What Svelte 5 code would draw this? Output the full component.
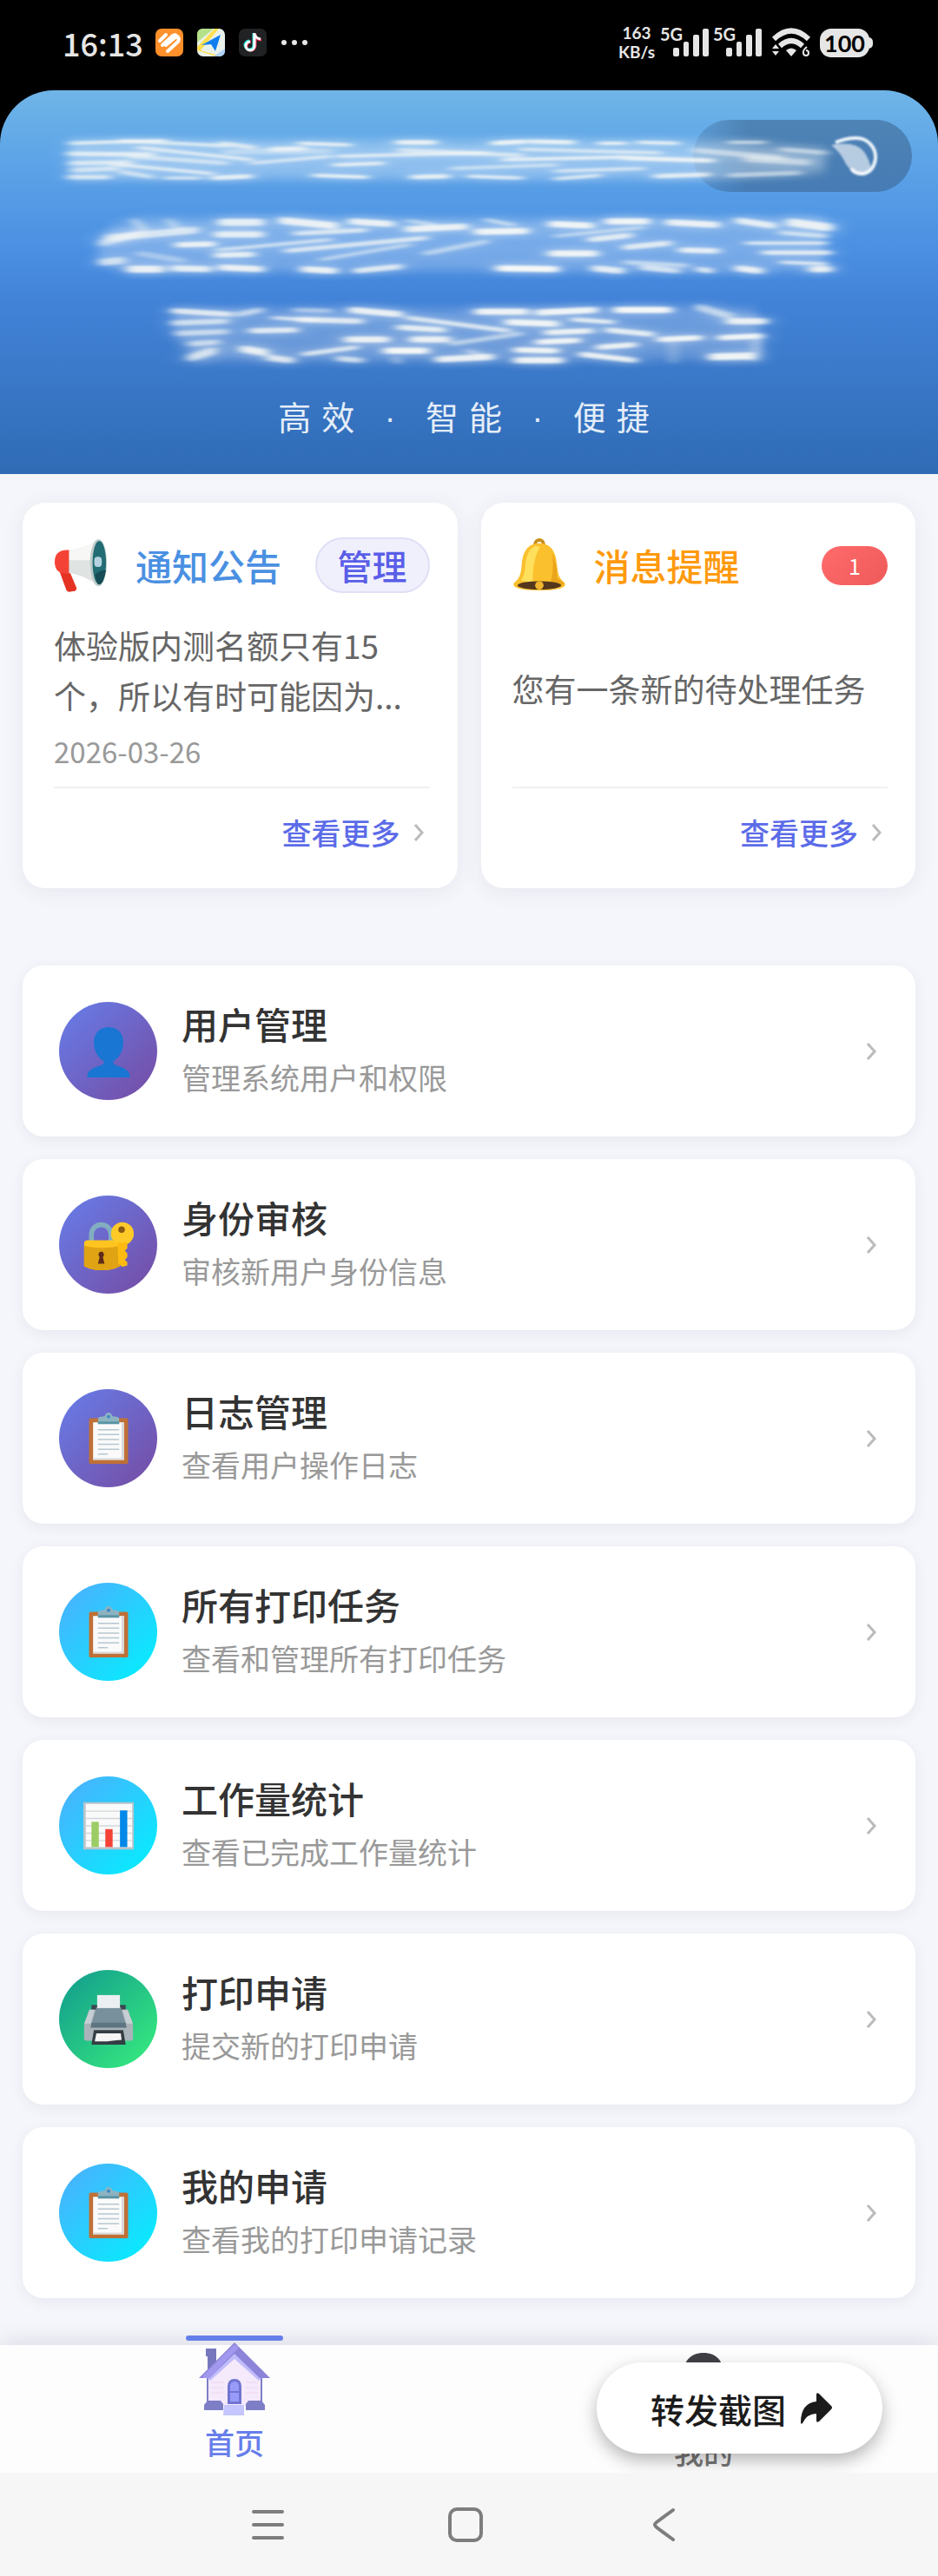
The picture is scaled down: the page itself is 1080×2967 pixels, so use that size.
<script lang="ts">
  type Icon = 'user' | 'lock' | 'clipboard' | 'chart' | 'printer';
  type Item = { title: string; note: string; icon: Icon; tone: 'violet' | 'cyan' | 'green' };

  const items: Item[] = [
    { title: '用户管理', note: '管理系统用户和权限', icon: 'user', tone: 'violet' },
    { title: '身份审核', note: '审核新用户身份信息', icon: 'lock', tone: 'violet' },
    { title: '日志管理', note: '查看用户操作日志', icon: 'clipboard', tone: 'violet' },
    { title: '所有打印任务', note: '查看和管理所有打印任务', icon: 'clipboard', tone: 'cyan' },
    { title: '工作量统计', note: '查看已完成工作量统计', icon: 'chart', tone: 'cyan' },
    { title: '打印申请', note: '提交新的打印申请', icon: 'printer', tone: 'green' },
    { title: '我的申请', note: '查看我的打印申请记录', icon: 'clipboard', tone: 'cyan' }
  ];

  // Brush strokes that cover the title: x1, y1, x2, y2, width, opacity
  const strokes: number[][] = [
    // first line
    [82, 61, 190, 58, 4, 0.75], [140, 58, 260, 64, 4, 0.7], [80, 73, 175, 74, 5, 0.75], [160, 66, 290, 80, 4, 0.7],
    [82, 84, 150, 83, 5, 0.65], [85, 92, 135, 90, 5, 0.6], [80, 100, 125, 100, 5, 0.7], [130, 85, 245, 96, 4, 0.7],
    [150, 76, 260, 84, 5, 0.55], [140, 94, 175, 100, 5, 0.6], [190, 101, 230, 101, 4, 0.6], [255, 61, 292, 66, 5, 0.7],
    [312, 68, 350, 67, 5, 0.8], [345, 61, 402, 63, 4, 0.8], [458, 60, 500, 60, 5, 0.9], [568, 61, 605, 59, 5, 0.9],
    [612, 59, 660, 60, 5, 0.85], [690, 61, 720, 61, 4, 0.8], [735, 60, 780, 61, 4, 0.8], [245, 101, 288, 99, 5, 0.85],
    [362, 98, 422, 100, 4, 0.85], [475, 100, 515, 99, 5, 0.85], [540, 99, 600, 101, 4, 0.75], [640, 102, 690, 98, 4, 0.7],
    [755, 99, 815, 97, 5, 0.8], [290, 84, 380, 76, 4, 0.6], [385, 86, 440, 84, 4, 0.8], [390, 76, 560, 72, 4, 0.7],
    [460, 69, 600, 75, 5, 0.6], [580, 80, 720, 77, 4, 0.75], [600, 68, 760, 72, 4, 0.6], [720, 78, 820, 81, 5, 0.85],
    [520, 90, 640, 86, 4, 0.5], [640, 93, 740, 90, 4, 0.6], [840, 60, 880, 60, 4, 0.55], [800, 69, 900, 78, 6, 0.5],
    [860, 79, 930, 83, 7, 0.5], [840, 98, 920, 95, 5, 0.5], [900, 68, 950, 72, 5, 0.5], [260, 71, 380, 70, 6, 0.35],
    // second line
    [155, 150, 165, 160, 6, 0.6], [195, 150, 205, 160, 6, 0.55], [125, 170, 225, 161, 8, 0.7], [118, 176, 160, 165, 8, 0.6],
    [255, 152, 300, 152, 8, 0.85], [325, 150, 385, 156, 8, 0.9], [405, 151, 450, 154, 7, 0.9], [470, 160, 535, 157, 7, 0.9],
    [250, 166, 300, 166, 7, 0.85], [340, 165, 420, 161, 5, 0.7], [550, 163, 605, 162, 7, 0.95], [635, 154, 680, 156, 7, 0.95],
    [560, 149, 590, 155, 4, 0.6], [700, 151, 745, 151, 7, 0.95], [770, 152, 825, 155, 7, 0.9], [850, 150, 890, 156, 7, 0.85],
    [910, 152, 955, 158, 9, 0.9], [205, 178, 245, 177, 6, 0.9], [250, 184, 380, 172, 4, 0.6], [330, 185, 490, 170, 5, 0.7],
    [250, 190, 290, 189, 6, 0.85], [370, 195, 470, 178, 4, 0.5], [490, 188, 560, 174, 5, 0.5], [635, 188, 685, 188, 7, 0.95],
    [680, 172, 725, 167, 6, 0.8], [720, 181, 770, 176, 6, 0.8], [785, 184, 825, 185, 6, 0.85], [860, 176, 950, 176, 4, 0.7],
    [880, 187, 955, 187, 5, 0.8], [900, 164, 950, 168, 5, 0.6], [118, 198, 140, 196, 8, 0.7], [150, 206, 185, 206, 8, 0.9],
    [200, 205, 240, 206, 7, 0.85], [255, 204, 300, 206, 7, 0.9], [350, 206, 385, 208, 7, 0.9], [410, 208, 460, 203, 6, 0.8],
    [575, 205, 640, 206, 7, 1], [685, 205, 715, 208, 7, 0.85], [740, 204, 780, 208, 6, 0.7], [805, 206, 818, 208, 6, 0.8],
    [850, 205, 875, 208, 7, 0.9], [900, 198, 950, 200, 4, 0.7], [935, 206, 955, 206, 7, 0.9], [470, 150, 500, 155, 4, 0.5],
    [720, 198, 790, 202, 5, 0.5], [160, 188, 210, 196, 6, 0.35], [640, 168, 740, 158, 4, 0.45],
    // third line
    [200, 254, 265, 258, 6, 0.8], [275, 258, 300, 253, 6, 0.6], [200, 268, 260, 266, 6, 0.65], [205, 280, 260, 278, 6, 0.6],
    [220, 292, 250, 290, 6, 0.6], [220, 308, 245, 300, 9, 0.75], [315, 262, 365, 265, 4, 0.7], [345, 264, 415, 266, 6, 0.8],
    [405, 253, 460, 258, 7, 0.9], [340, 253, 380, 254, 5, 0.45], [550, 255, 605, 255, 7, 0.95], [620, 256, 685, 253, 7, 0.95],
    [710, 253, 770, 253, 7, 1], [805, 250, 840, 260, 8, 0.6], [840, 266, 880, 266, 7, 0.9], [470, 262, 585, 277, 5, 0.75],
    [290, 277, 340, 276, 6, 0.8], [460, 273, 510, 276, 6, 0.85], [585, 267, 640, 269, 7, 0.95], [660, 264, 705, 267, 5, 0.8],
    [630, 279, 680, 277, 6, 0.9], [700, 276, 750, 281, 6, 0.85], [400, 287, 445, 287, 7, 0.9], [475, 287, 515, 287, 7, 0.9],
    [620, 290, 665, 288, 6, 0.95], [760, 287, 805, 285, 6, 0.95], [830, 285, 875, 283, 6, 0.95], [280, 298, 305, 302, 8, 0.9],
    [310, 308, 335, 311, 7, 0.8], [350, 304, 410, 296, 5, 0.75], [390, 309, 415, 311, 6, 0.7], [445, 300, 490, 300, 7, 1],
    [505, 310, 565, 307, 7, 0.9], [595, 299, 640, 300, 6, 0.95], [595, 311, 645, 311, 7, 0.95], [690, 296, 730, 293, 6, 0.9],
    [670, 304, 730, 311, 6, 0.9], [820, 307, 865, 306, 8, 0.95], [872, 285, 868, 310, 5, 0.7], [775, 290, 775, 312, 5, 0.4],
    [520, 292, 600, 280, 5, 0.5], [540, 300, 560, 308, 5, 0.5], [455, 309, 458, 313, 5, 0.6]
  ];
</script>

{#snippet chevron()}
  <svg class="chevron" viewBox="0 0 14 24" aria-hidden="true"><path d="M3 3l8 9-8 9" /></svg>
{/snippet}

{#snippet signal()}
  <span class="signal">
    <span class="gen">5G</span>
    <svg viewBox="0 0 42 32" aria-hidden="true" fill="#e6e6e6">
      <rect x="0" y="22" width="7" height="10" rx="2" /><rect x="12" y="15" width="6" height="17" rx="2" />
      <rect x="23" y="7" width="7" height="25" rx="2" /><rect x="34" y="0" width="7" height="32" rx="2" />
    </svg>
  </span>
{/snippet}

{#snippet glyph(name: Icon)}
  <svg viewBox="0 0 64 64" aria-hidden="true">
    {#if name === 'user'}
      <path fill="#1976d2" d="M32 2c-12 0-19 9-18 21 .5 9 5 17 12 21v3c-3 4-18 4-20 14-.4 2 0 3 1 3h50c1 0 1.400-1 1-3-2-10-17-10-20-14v-3c7-4 11.500-12 12-21C51 11 44 2 32 2z" />
    {:else if name === 'lock'}
      <path fill="none" stroke="#82aec0" stroke-width="6" d="M11 32V19a12 12 0 0 1 24 0v13" />
      <path fill="#ffc41f" d="M2 30q0-4 4-4h36q4 0 4 4v28q-10 5-22 5T2 58z" />
      <path fill="#dfa313" d="M2 33q22 5 44 0v25q-10 5-22 5T2 58z" />
      <path fill="#5d2a1b" d="M23 40a4 4 0 0 1 2 7l2 8h-8l2-8a4 4 0 0 1 2-7z" />
      <circle cx="49" cy="18" r="14" fill="#ffca28" /><circle cx="48" cy="13" r="4" fill="#8a5a13" />
      <path fill="#fdbb12" d="M43 29h12v7l-3 3 3 3v5l-3 3 3 3v4l-6 2-5-4z" />
    {:else if name === 'clipboard'}
      <rect x="8" y="7" width="48" height="56" rx="2" fill="#bf7036" />
      <path fill="#fafafa" d="M13 12h38v46H13z" /><path fill="#d9d9d9" d="M48 12h3v46H13v-2h35z" />
      <path fill="#8db3c1" d="M19 8q0-3 4-3 5 0 5-2c1-4 7-4 8 0q0 2 5 2 4 0 4 3v6H19z" />
      <path fill="#5a95a5" d="M19 11h26v3H19z" /><circle cx="32" cy="5" r="2" fill="#3b86c5" />
      <path stroke="#b6c7d0" stroke-width="1.500" d="M19 21h26M19 27h26M19 33h26M19 39h26M19 45h26M19 51h12" />
    {:else if name === 'chart'}
      <path fill="#b8c4ca" d="M1 3h62v58H1z" /><path fill="#fafafa" d="M4 5h57v53H4z" />
      <path stroke="#d2d8da" stroke-width="1.500" d="M4 14h57M4 23h57M4 32h57M4 41h57M4 50h57" />
      <path fill="#9ccc65" d="M11 27h9v31h-9z" /><path fill="#f44336" d="M28 36h9v22h-9z" /><path fill="#0288e8" d="M46 13h9v45h-9z" />
    {:else}
      <path fill="#3b4850" d="M11 14h42v9H11z" />
      <path fill="#a9b3b9" d="M8 20h48l6 18v18q0 2-3 2H5q-3 0-3-2V38z" />
      <path fill="#c6cfd4" d="M9 20h6l-5 17H2zM49 20h6l7 17h-8z" />
      <path fill="#78909c" d="M17 17h30l7 24H10z" /><path fill="#5d7581" d="M11 36h42l1 6H10z" />
      <path fill="#eceff1" d="M18 2h28v16H18z" />
      <path fill="#333d43" d="M14 45h36l3 18H11z" /><path fill="#f5f5f5" d="M17 49h30l1 8q-14 1-18 2H15z" />
    {/if}
  </svg>
{/snippet}

<div class="app">
  <div class="top">
    <div class="status">
      <span class="clock">16:13</span>
      <svg class="app-icon" viewBox="0 0 32 32" aria-hidden="true">
        <rect width="32" height="32" rx="7" fill="#ff902b" />
        <path d="M5 14l7-7M8 19L20 8q4-2 4 1L12 19M14 26l12-11q2-4-1-6" fill="none" stroke="#fff" stroke-width="4" stroke-linecap="round" />
      </svg>
      <svg class="app-icon" viewBox="0 0 32 32" aria-hidden="true">
        <rect width="32" height="32" rx="7" fill="#e9f2ea" />
        <path fill="#b5e08a" d="M0 7q0-7 7-7h12L0 16z" /><path fill="#ffdf52" d="M0 21l20-21h5L4 25l24 7h-6L0 25z" /><path fill="#b0d2fb" d="M19 32l13-9v2q0 7-7 7z" />
        <path fill="#107df0" d="M5 19L27 7l-6 19-5-8z" />
      </svg>
      <svg class="app-icon" viewBox="0 0 32 32" aria-hidden="true">
        <rect width="32" height="32" rx="7" fill="#202224" />
        <g fill="none" stroke-width="3"><path stroke="#ee2950" d="M19 6v14a5 5 0 1 1-5-5M19 7q1 6 7 6" /><path stroke="#2ae6e0" d="M17 5v14a5 5 0 1 1-5-5" /><path stroke="#fff" d="M18 5v15a5 5 0 1 1-5-5M18 6q1 5 7 6" /></g>
      </svg>
      <svg class="dots" viewBox="0 0 32 8" fill="#e6e6e6" aria-hidden="true"><circle cx="4" cy="4" r="3" /><circle cx="16" cy="4" r="3" /><circle cx="28" cy="4" r="3" /></svg>
      <span class="speed"><span>163</span><span>KB/s</span></span>
      {@render signal()}
      {@render signal()}
      <svg class="wifi" viewBox="0 0 46 34" aria-hidden="true">
        <g fill="none" stroke="#e6e6e6" stroke-width="6"><path d="M3 13q20-19 40 0" /><path d="M10 21q13-12 26 0" /></g>
        <path fill="#e6e6e6" d="M17 26q6-5 12 0l-6 7zM1 24l4-5 4 5zM1 27l4 5 4-5z" />
        <path d="M41 22q-5 4-4 7a3 3 0 1 0 3-3" fill="none" stroke="#e6e6e6" stroke-width="2" />
      </svg>
      <span class="battery">100</span>
    </div>

    <header class="hero">
      <div class="capsule"></div>
      <svg class="brush" viewBox="0 0 1080 330" aria-hidden="true">
        <defs>
          <filter id="haze" x="-10%" y="-30%" width="120%" height="160%"><feGaussianBlur stdDeviation="6" /></filter>
          <filter id="smear" x="-5%" y="-5%" width="110%" height="110%"><feGaussianBlur stdDeviation="12 3" /></filter>
          <filter id="soft" x="-5%" y="-5%" width="110%" height="110%"><feGaussianBlur stdDeviation="6 1" /></filter>
          <filter id="edge" x="-20%" y="-20%" width="140%" height="140%"><feGaussianBlur stdDeviation="1" /></filter>
        </defs>
        <g filter="url(#haze)">
          <path fill="#fff" opacity=".3" d="M80 58h740l130 10v26l-130 8H80z" />
          <path fill="#e6ecf8" opacity=".28" d="M125 158l40-10h785v60H150l-40-15z" />
          <path fill="#e6ecf8" opacity=".26" d="M200 252h670l10 56-650 4-30-30z" />
        </g>
        <g filter="url(#smear)" stroke="#eef3f8" stroke-linecap="round">
          {#each strokes as [x1, y1, x2, y2, w, o]}
            <line {x1} {y1} {x2} {y2} stroke-width={w * 2} opacity={o / 3} />
          {/each}
        </g>
        <g filter="url(#soft)" stroke="#f4f7f6" stroke-linecap="round">
          {#each strokes as [x1, y1, x2, y2, w, o]}
            <line {x1} {y1} {x2} {y2} stroke-width={w} opacity={o} />
          {/each}
        </g>
        <g filter="url(#edge)">
          <path d="M962 60q12-5 24-5a22 22 0 0 1 22 24q-2 14-13 17-11 1-15-6" fill="none" stroke="#eef5fb" stroke-width="4" />
          <path d="M957 63q28-5 38 8 6 8 8 20-8 8-18 4-10-6-13-14-5-10-15-18z" fill="#fff" opacity=".6" />
        </g>
      </svg>
      <p class="tagline">高效 · 智能 · 便捷</p>
    </header>
  </div>

  <main>
    <section class="cards">
      <article class="card">
        <div class="head">
          <svg class="emoji" viewBox="0 0 64 64" aria-hidden="true">
            <path fill="#e53323" d="M7 40h12l8 19q0 4-5 4-5 2-7-1z" />
            <path fill="#dfe3e1" d="M16 14Q36 13 52 2v54Q36 43 16 41z" /><path fill="#f7f7f5" d="M16 14Q36 13 48 4v22H16z" />
            <path fill="#f44336" d="M18 14q-17-1-17 14t17 14z" />
            <ellipse cx="53" cy="29" rx="10" ry="28" fill="#bfcccb" /><ellipse cx="54" cy="29" rx="8" ry="26" fill="#226c73" />
            <path fill="#174b55" d="M49 43q6-5 13-5-3 16-8 17-3 0-5-12z" /><rect x="48" y="22" width="9" height="12" rx="4" fill="#b4d2df" />
          </svg>
          <h2 class="blue">通知公告</h2>
          <button class="manage" type="button">管理</button>
        </div>
        <div class="body">
          <p class="text">体验版内测名额只有15<br />个，所以有时可能因为...</p>
          <time datetime="2026-03-26">2026-03-26</time>
        </div>
        <a class="more" href="#notices">查看更多{@render chevron()}</a>
      </article>
      <article class="card">
        <div class="head">
          <svg class="emoji" viewBox="0 0 64 64" aria-hidden="true">
            <circle cx="32" cy="7" r="5" fill="none" stroke="#c88f1c" stroke-width="4" />
            <path fill="#fbc02d" d="M32 6c15 0 20 12 21 26 1 12 3 16 9 21 4 6-10 9-30 9S-2 59 2 53c6-5 8-9 9-21C12 18 17 6 32 6z" />
            <path fill="#ffe05c" d="M27 9C17 14 16 25 15 36q-1 9-5 14 8 2 14 2 0-28 9-42z" /><path fill="#eba51b" d="M47 16q7 18 6 31l8 6q0 5-19 7 9-18 5-44z" />
            <ellipse cx="32" cy="56" rx="26" ry="5" fill="#54371d" /><circle cx="32" cy="56" r="5" fill="#f3b52d" />
          </svg>
          <h2 class="orange">消息提醒</h2>
          <span class="badge">1</span>
        </div>
        <div class="body middle">
          <p class="text">您有一条新的待处理任务</p>
        </div>
        <a class="more" href="#messages">查看更多{@render chevron()}</a>
      </article>
    </section>

    <nav class="menu" aria-label="功能">
      {#each items as item}
        <a class="item" href="#{item.icon}">
          <span class="disc {item.tone}">{@render glyph(item.icon)}</span>
          <span class="label">
            <span class="title">{item.title}</span>
            <span class="note">{item.note}</span>
          </span>
          {@render chevron()}
        </a>
      {/each}
    </nav>
  </main>

  <nav class="tabs" aria-label="标签栏">
    <a class="tab active" href="#home">
      <svg viewBox="0 0 82 84" aria-hidden="true">
        <path fill="#7777bd" d="M8 7h12v26H10V16H8z" />
        <path fill="#f5e9fc" d="M10 36L41 9l31 27v37H10z" /><path fill="#7f7fc5" d="M9 40h2v28H9zM71 40h2v28h-2z" />
        <path stroke="#ead6ef" stroke-width="1" d="M14 46h14M14 52h14M14 58h14M54 46h14M54 52h14M54 58h14" />
        <path fill="#c0bcfb" d="M10 41L41 12l31 29-3 3-28-25-28 25z" />
        <path fill="#8b84d9" d="M0 41L41 0l41 41H70L41 13 12 41z" /><path fill="#a298ee" d="M5 38L41 2l5 4-34 35H5z" />
        <path fill="#7e7ec6" d="M6 72l4-5h15l3 4v7H6zM54 71l3-4h15l4 5v6H54z" />
        <path fill="#c5c5ff" d="M29 72h23v12H28z" /><path fill="#7175d0" d="M33 71V51q0-9 8-9t8 9v20z" />
        <path fill="#999bfa" d="M36 68V51q0-6 5-6t5 6v17z" /><path stroke="#7175d0" stroke-width="2" d="M36 57h10" />
      </svg>
      <span>首页</span>
    </a>
    <a class="tab" href="#mine">
      <svg viewBox="0 0 82 84" aria-hidden="true">
        <path fill="#414046" d="M41 9c-15 0-24 10-23 26 1 12 7 20 15 25-2 7-26 5-28 20-.4 3 0 4 2 4h68c2 0 2.400-1 2-4-2-15-26-13-28-20 8-5 14-13 15-25C65 19 56 9 41 9z" />
      </svg>
      <span>我的</span>
    </a>
    <button class="share" type="button">
      转发截图
      <svg viewBox="0 0 38 38" aria-hidden="true"><path fill="#1b1b1b" d="M19 3q0-3 3-1l14 14q2 2 0 4L22 34q-3 2-3-1v-8Q8 25 3 36q-2 2-2-1Q1 13 19 11z" /></svg>
    </button>
  </nav>

  <footer class="system">
    <button type="button" aria-label="最近任务"><svg viewBox="0 0 40 40"><path d="M4 5h33M4 20h33M4 35h33" /></svg></button>
    <button type="button" aria-label="主屏幕"><svg viewBox="0 0 40 40"><rect x="2" y="2" width="36" height="36" rx="8" /></svg></button>
    <button type="button" aria-label="返回"><svg viewBox="0 0 40 40"><path d="M31 3L12 17q-4 3 0 6l19 14" /></svg></button>
  </footer>
</div>

<style>
  :global(body) {
    background: #f5f6fb;
  }
  .app {
    font-family: 'Noto Sans CJK SC', sans-serif;
    color: #333;
    background: #f5f6fb;
    min-height: 100vh;
    display: flex;
    flex-direction: column;
  }
  h2, p {
    margin: 0;
  }
  button {
    font: inherit;
    border: 0;
    cursor: pointer;
  }
  a {
    color: inherit;
    text-decoration: none;
  }
  svg {
    display: block;
    flex: none;
  }

  .top {
    background: #000;
  }
  .status {
    height: 104px;
    box-sizing: border-box;
    padding: 0 79px 6px 72px;
    display: flex;
    align-items: center;
    color: #e6e6e6;
  }
  .clock {
    font-size: 36px;
    font-weight: 500;
    margin-right: 14px;
  }
  .app-icon {
    width: 32px;
    height: 32px;
    margin-right: 16px;
  }
  .dots {
    width: 32px;
    height: 8px;
  }
  .speed {
    margin-left: auto;
    width: 46px;
    display: flex;
    flex-direction: column;
    align-items: center;
    font: 700 19px/22px Lato, sans-serif;
  }
  .signal {
    display: flex;
    position: relative;
    padding-left: 15px;
    width: 42px;
    margin-left: 4px;
  }
  .signal svg {
    width: 42px;
    height: 32px;
  }
  .gen {
    position: absolute;
    left: 0;
    top: -4px;
    font: 700 20px/20px Lato, sans-serif;
  }
  .wifi {
    width: 46px;
    height: 34px;
    margin: 0 10px;
  }
  .battery {
    background: #e6e6e6;
    color: #000;
    border-radius: 13px;
    width: 57px;
    font: 700 27px/33px Lato, sans-serif;
    text-align: center;
    position: relative;
  }
  .battery::after {
    content: '';
    position: absolute;
    right: -4px;
    top: 10px;
    width: 5px;
    height: 13px;
    border-radius: 0 5px 5px 0;
    background: #e6e6e6;
  }

  .hero {
    position: relative;
    border-radius: 62px 62px 0 0;
    overflow: hidden;
    background: linear-gradient(180deg, #6fb5e8 0%, #5da4e8 18%, #4a8fe2 42%, #4283d8 55%, #3a78c8 75%, #2f6bb5 100%);
    padding-bottom: 24px;
  }
  .capsule {
    position: absolute;
    right: 30px;
    top: 34px;
    width: 252px;
    height: 83px;
    border-radius: 42px;
    background: linear-gradient(90deg, rgba(54, 90, 130, 0.2), rgba(54, 90, 130, 0.5) 25%);
  }
  .brush {
    position: relative;
    width: 100%;
  }
  .tagline {
    position: relative;
    margin-top: 8px;
    text-align: center;
    font-family: 'Liberation Sans', 'Noto Sans CJK SC', sans-serif;
    font-size: 38px;
    line-height: 80px;
    letter-spacing: 12px;
    color: #e4edf8;
  }

  main {
    padding: 33px 26px 54px;
  }
  .cards {
    display: grid;
    grid-template-columns: 1fr 1fr;
    gap: 27px;
    margin-bottom: 89px;
  }
  .card {
    background: #fff;
    border-radius: 26px;
    padding: 36px 32px 36px 36px;
    display: flex;
    flex-direction: column;
    box-shadow: 0 4px 24px rgba(60, 60, 100, 0.08);
  }
  .head {
    display: flex;
    align-items: center;
    height: 72px;
  }
  .emoji {
    width: 62px;
    height: 62px;
  }
  .head h2 {
    font-size: 42px;
    font-weight: 500;
    line-height: 60px;
    margin-left: 32px;
    margin-right: auto;
  }
  .blue {
    color: #4a90e2;
  }
  .orange {
    color: #ff9a0e;
  }
  .manage {
    color: #5a5ee8;
    background: #f0f0fd;
    border: 2px solid #dfdff5;
    border-radius: 32px;
    padding: 0 24px;
    font-size: 40px;
    font-weight: 500;
    line-height: 60px;
  }
  .badge {
    width: 76px;
    border-radius: 23px;
    background: linear-gradient(135deg, #ff6b6b, #ee5a5a);
    color: #fff;
    font-size: 25px;
    line-height: 45px;
    text-align: center;
  }
  .body {
    flex: 1;
    padding-top: 27px;
  }
  .middle {
    padding-top: 12px;
    display: flex;
    align-items: center;
  }
  .text {
    font-size: 37px;
    line-height: 58px;
    color: #666;
  }
  time {
    display: block;
    margin-top: 14px;
    font-size: 33px;
    line-height: 42px;
    color: #999;
  }
  .more {
    margin-top: 20px;
    padding: 23px 6px 0 0;
    border-top: 2px solid #f0f0f2;
    display: flex;
    justify-content: flex-end;
    align-items: center;
    gap: 14px;
    font-size: 34px;
    line-height: 56px;
    font-weight: 500;
    color: #5b6be8;
  }
  .chevron {
    width: 14px;
    height: 24px;
    fill: none;
    stroke: #bbb;
    stroke-width: 3px;
  }

  .menu {
    display: flex;
    flex-direction: column;
    gap: 26px;
  }
  .item {
    background: #fff;
    border-radius: 24px;
    padding: 38px 44px 38px 42px;
    display: flex;
    align-items: center;
    box-shadow: 0 4px 16px rgba(60, 60, 100, 0.07);
  }
  .disc {
    width: 113px;
    height: 113px;
    border-radius: 50%;
    display: grid;
    place-items: center;
  }
  .disc svg {
    width: 60px;
    height: 60px;
  }
  .violet {
    background: linear-gradient(135deg, #667eea, #764ba2);
  }
  .cyan {
    background: linear-gradient(135deg, #4facfe, #00f2fe);
  }
  .green {
    background: linear-gradient(135deg, #11998e, #38ef7d);
  }
  .label {
    flex: 1;
    margin-left: 28px;
    display: flex;
    flex-direction: column;
    gap: 3px;
  }
  .title {
    font-size: 42px;
    line-height: 58px;
    font-weight: 500;
  }
  .note {
    font-size: 34px;
    line-height: 60px;
    color: #999;
  }

  .tabs {
    position: relative;
    display: flex;
    background: #fdfdfe;
    box-shadow: 0 -4px 24px rgba(60, 60, 90, 0.13);
  }
  .tab {
    position: relative;
    flex: 1;
    display: flex;
    flex-direction: column;
    align-items: center;
    height: 147px;
    font-size: 34px;
    font-weight: 500;
    line-height: 50px;
    color: #777;
  }
  .tab svg {
    width: 82px;
    height: 84px;
    margin-bottom: 14px;
  }
  .tab.active {
    color: #667eea;
  }
  .tab.active svg {
    margin: -3px 0 6px;
  }
  .tab.active::before {
    content: '';
    position: absolute;
    top: -11px;
    width: 112px;
    height: 6px;
    border-radius: 3px;
    background: #667eea;
  }
  .share {
    position: absolute;
    right: 64px;
    top: 20px;
    height: 105px;
    padding: 0 57px 0 62px;
    border-radius: 53px;
    background: #fff;
    box-shadow: 0 8px 20px rgba(0, 0, 0, 0.28);
    display: flex;
    align-items: center;
    gap: 16px;
    font-size: 39px;
    font-weight: 500;
    color: #1b1b1b;
  }
  .share svg {
    width: 38px;
    height: 38px;
  }

  .system {
    position: relative;
    background: #f6f6f6;
    flex: 1;
    min-height: 119px;
    display: flex;
    justify-content: center;
    align-items: center;
    gap: 188px;
    padding-right: 8px;
  }
  .system button {
    background: none;
    padding: 0;
  }
  .system svg {
    width: 40px;
    height: 40px;
    fill: none;
    stroke: #7d7d7d;
    stroke-width: 4px;
    stroke-linecap: round;
  }
</style>
